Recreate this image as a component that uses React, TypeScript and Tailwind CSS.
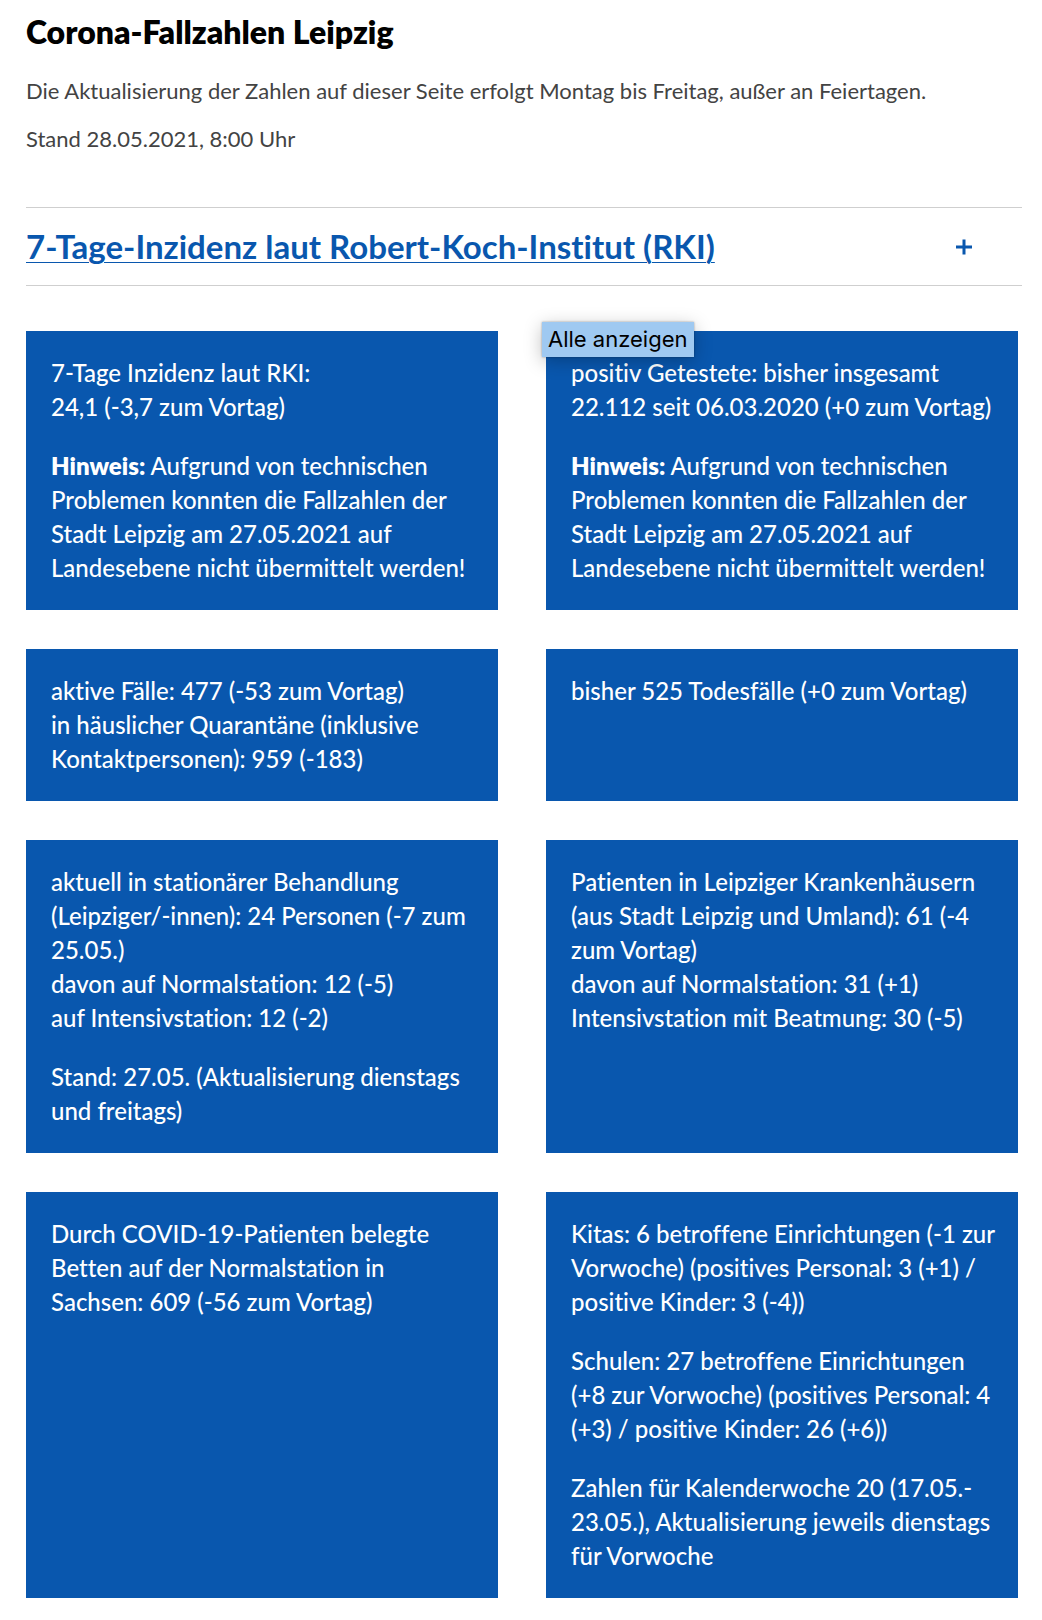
import type { ReactNode } from "react";

function Card({ children }: { children: ReactNode }) {
  return (
    <section className="relative flex flex-col gap-[25px] bg-[#0957ae] py-[25px] pr-4 pl-[25px] text-[24px] leading-[34px] font-medium text-white">
      {children}
    </section>
  );
}

function Notice() {
  return (
    <p>
      <strong className="font-extrabold">Hinweis:</strong> Aufgrund von technischen
      <br />
      Problemen konnten die Fallzahlen der
      <br />
      Stadt Leipzig am 27.05.2021 auf
      <br />
      Landesebene nicht übermittelt werden!
    </p>
  );
}

export default function App() {
  return (
    <main className="min-h-screen bg-white pt-[11px] pr-5 pb-[22px] pl-[26px] font-[Lato,sans-serif] [font-variant-ligatures:none]">
      <h1 className="text-[32px] leading-[42px] font-extrabold text-black">Corona-Fallzahlen Leipzig</h1>
      <div className="mt-[22px] flex flex-col gap-4 text-[22px] leading-8 text-[#434343]">
        <p>Die Aktualisierung der Zahlen auf dieser Seite erfolgt Montag bis Freitag, außer an Feiertagen.</p>
        <p>Stand 28.05.2021, 8:00 Uhr</p>
      </div>

      <div className="mt-[52px] flex items-center justify-between border-y border-[#cfcfcf] py-[18px] pr-[50px] text-[#0957ae]">
        <h2 className="text-[33px] leading-[41px] font-bold">
          <a href="#inzidenz" className="underline decoration-1 underline-offset-3">
            7-Tage-Inzidenz laut Robert-Koch-Institut (RKI)
          </a>
        </h2>
        <button type="button" aria-label="Abschnitt aufklappen">
          <svg className="size-4" viewBox="0 0 16 16" fill="none" stroke="currentColor" strokeWidth="3" aria-hidden="true">
            <path d="M0 8h16M8 0.500v15" />
          </svg>
        </button>
      </div>

      <div className="mt-[45px] mr-1 grid grid-cols-2 gap-x-12 gap-y-[39px]">
        <Card>
          <p>
            7-Tage Inzidenz laut RKI:
            <br />
            24,1 (-3,7 zum Vortag)
          </p>
          <Notice />
        </Card>
        <Card>
          <div
            role="tooltip"
            className="absolute -top-[9px] -left-1 bg-[#9fc9f1] px-1.5 py-0.5 font-[Inter,sans-serif] text-[22px] leading-[31px] font-normal whitespace-nowrap text-black shadow-[0_0_2px_rgba(0,0,0,0.35),0_4px_18px_rgba(0,0,0,0.25)]"
          >
            Alle anzeigen
          </div>
          <p>
            positiv Getestete: bisher insgesamt
            <br />
            22.112 seit 06.03.2020 (+0 zum Vortag)
          </p>
          <Notice />
        </Card>
        <Card>
          <p>
            aktive Fälle: 477 (-53 zum Vortag)
            <br />
            in häuslicher Quarantäne (inklusive
            <br />
            Kontaktpersonen): 959 (-183)
          </p>
        </Card>
        <Card>
          <p>bisher 525 Todesfälle (+0 zum Vortag)</p>
        </Card>
        <Card>
          <p>
            aktuell in stationärer Behandlung
            <br />
            (Leipziger/-innen): 24 Personen (-7 zum
            <br />
            25.05.)
            <br />
            davon auf Normalstation: 12 (-5)
            <br />
            auf Intensivstation: 12 (-2)
          </p>
          <p>
            Stand: 27.05. (Aktualisierung dienstags
            <br />
            und freitags)
          </p>
        </Card>
        <Card>
          <p>
            Patienten in Leipziger Krankenhäusern
            <br />
            (aus Stadt Leipzig und Umland): 61 (-4
            <br />
            zum Vortag)
            <br />
            davon auf Normalstation: 31 (+1)
            <br />
            Intensivstation mit Beatmung: 30 (-5)
          </p>
        </Card>
        <Card>
          <p>
            Durch COVID-19-Patienten belegte
            <br />
            Betten auf der Normalstation in
            <br />
            Sachsen: 609 (-56 zum Vortag)
          </p>
        </Card>
        <Card>
          <p>
            Kitas: 6 betroffene Einrichtungen (-1 zur
            <br />
            Vorwoche) (positives Personal: 3 (+1) /
            <br />
            positive Kinder: 3 (-4))
          </p>
          <p>
            Schulen: 27 betroffene Einrichtungen
            <br />
            (+8 zur Vorwoche) (positives Personal: 4
            <br />
            (+3) / positive Kinder: 26 (+6))
          </p>
          <p>
            Zahlen für Kalenderwoche 20 (17.05.-
            <br />
            23.05.), Aktualisierung jeweils dienstags
            <br />
            für Vorwoche
          </p>
        </Card>
      </div>
    </main>
  );
}
